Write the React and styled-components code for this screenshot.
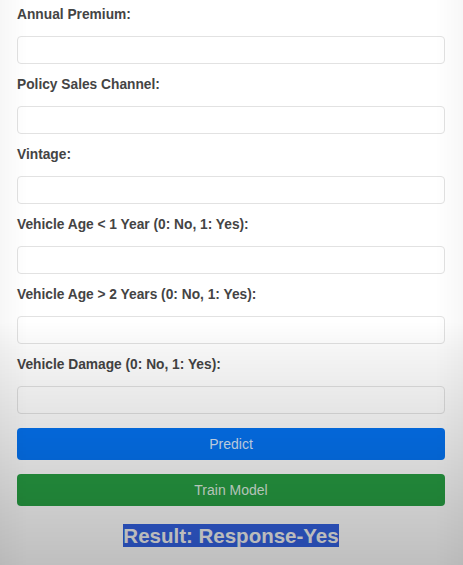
import React from "react";
import styled, { createGlobalStyle } from "styled-components";

const Global = createGlobalStyle`
  html, body { margin: 0; padding: 0; }
  body {
    background: #ffffff;
    font-family: "Liberation Sans", Arial, sans-serif;
    min-height: 565px;
  }
  body::after {
    content: "";
    position: fixed;
    inset: 0;
    pointer-events: none;
    background:
      linear-gradient(to bottom,
        rgba(0,0,0,0) 0%,
        rgba(0,0,0,0) 57%,
        rgba(0,0,0,0.04) 62%,
        rgba(0,0,0,0.09) 71%,
        rgba(0,0,0,0.14) 80%,
        rgba(0,0,0,0.20) 90%,
        rgba(0,0,0,0.25) 100%),
      linear-gradient(to right,
        rgba(0,0,0,0.03) 0%,
        rgba(0,0,0,0) 6%,
        rgba(0,0,0,0) 94%,
        rgba(0,0,0,0.03) 100%);
  }
`;

const Form = styled.form`
  display: flex;
  flex-direction: column;
  padding: 7px 18px 0 17px;
`;

const Field = styled.div`
  display: flex;
  flex-direction: column;
  margin-bottom: 13px;
`;

const Label = styled.label`
  font-size: 13.75px;
  font-weight: bold;
  line-height: 16px;
  color: #444444;
  margin-bottom: 13px;
`;

const Input = styled.input`
  box-sizing: border-box;
  height: 28px;
  width: 100%;
  border: 1px solid #e2e2e2;
  border-radius: 4px;
  background: #ffffff;
  margin: 0;
  padding: 0 8px;
  font: inherit;
`;

const Actions = styled.div`
  display: flex;
  flex-direction: column;
  gap: 14px;
  padding-top: 1px;
`;

const Button = styled.button`
  box-sizing: border-box;
  height: 32px;
  width: 100%;
  border: none;
  border-radius: 4px;
  background: ${(p) => p.$bg};
  color: rgba(255,255,255,0.85);
  font-family: "Liberation Sans", Arial, sans-serif;
  font-size: 14px;
  margin: 0;
  cursor: pointer;
`;

const Result = styled.div`
  text-align: center;
  margin-top: 18px;
  font-size: 20.5px;
  font-weight: bold;
  line-height: 23px;
`;

const Highlight = styled.span`
  background: #3462e2;
  color: #f2f2f2;
`;

const fields = [
  "Annual Premium:",
  "Policy Sales Channel:",
  "Vintage:",
  "Vehicle Age < 1 Year (0: No, 1: Yes):",
  "Vehicle Age > 2 Years (0: No, 1: Yes):",
  "Vehicle Damage (0: No, 1: Yes):",
];

export default function App() {
  return (
    <>
      <Global />
      <Form onSubmit={(e) => e.preventDefault()}>
        {fields.map((f) => (
          <Field key={f}>
            <Label>{f}</Label>
            <Input type="text" />
          </Field>
        ))}
        <Actions>
          <Button type="button" $bg="#0575f5">Predict</Button>
          <Button type="button" $bg="#28a044">Train Model</Button>
        </Actions>
        <Result>
          <Highlight>Result: Response-Yes</Highlight>
        </Result>
      </Form>
    </>
  );
}
